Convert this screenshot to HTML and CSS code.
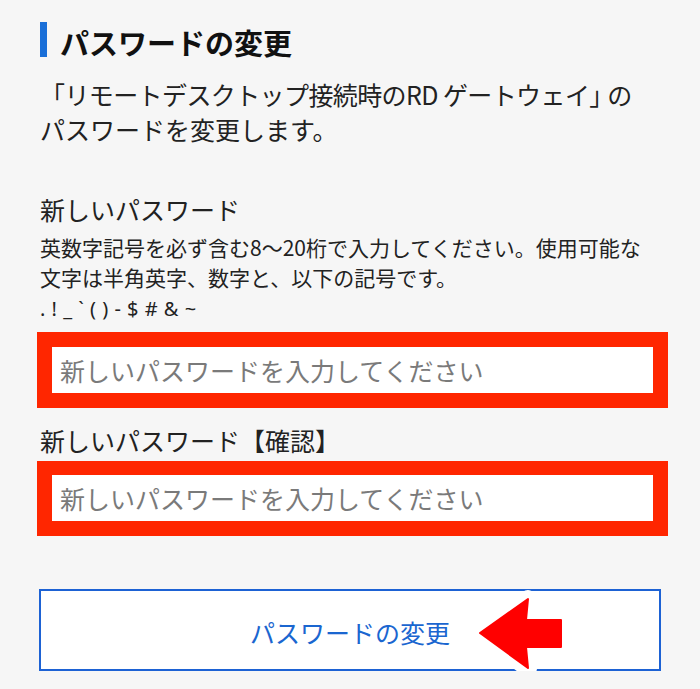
FILE: index.html
```html
<!DOCTYPE html>
<html lang="ja">
<head>
    <meta charset="UTF-8">
    <meta name="viewport" content="width=device-width, initial-scale=1.0">
    <title>パスワードの変更</title>
    <link rel="stylesheet" href="styles.css">
</head>
<body>
    <div class="page">
        <h2 class="title">パスワードの変更</h2>
        <p class="lead"><span class="tight">「リモートデスクトップ接続時のRD ゲートウェイ<span class="half">」</span>の</span><br>パスワードを変更します。</p>

        <form class="pw-form">
            <label class="field-label" for="new-password">新しいパスワード</label>
            <p class="help">英数字記号を必ず含む8〜20桁で入力してください。使用可能な<br>文字は半角英字、数字と、以下の記号です。<br><span class="symbols">. ! _ ` ( ) - $ # &amp; ~</span></p>

            <!-- highlighted input -->
            <div class="mark">
                <input type="password" id="new-password" class="pw-input" placeholder="新しいパスワードを入力してください">
            </div>

            <label class="field-label label-confirm" for="confirm-password">新しいパスワード【確認】</label>
            <div class="mark">
                <input type="password" id="confirm-password" class="pw-input" placeholder="新しいパスワードを入力してください">
            </div>

            <div class="submit-wrap">
                <button type="submit" class="submit-btn">パスワードの変更</button>
                <!-- pointer arrow -->
                <svg class="arrow" width="110" height="110" viewBox="0 0 110 110">
                    <path d="M10 55 L58 21 L56 42 L91 42 L91 69 L56 69 L58 90 Z" fill="#fff" stroke="#fff" stroke-width="18" stroke-linejoin="round"/>
                    <path d="M10 55 L58 21 L56 42 L91 42 L91 69 L56 69 L58 90 Z" fill="#ff0000" stroke="#ff0000" stroke-width="2" stroke-linejoin="round"/>
                </svg>
            </div>
        </form>
    </div>
</body>
</html>
```

FILE: styles.css
```css
body {
    margin: 0;
    padding: 0;
    background: #f6f6f6;
    font-family: "Noto Sans CJK JP", "Noto Sans", sans-serif;
    color: #222;
}

.page {
    padding: 22px 32px 0 40px;
}

/* Title */
.title {
    margin: 0;
    border-left: 7px solid #1a6fd8;
    padding: 5px 0 0 13px;
    font-size: 29px;
    font-weight: bold;
    line-height: 30px;
    color: #111;
}

.lead {
    margin: 20px 0 0;
    font-size: 25px;
    line-height: 35px;
}

.tight {
    letter-spacing: -0.6px;
}

.half {
    font-feature-settings: "halt";
    margin-right: 6px;
}

/* Form */
.pw-form {
    display: flex;
    flex-direction: column;
    margin-top: 45px;
}

.field-label {
    font-size: 25px;
    line-height: 35px;
}

.help {
    margin: 5px 0 0;
    font-size: 21px;
    line-height: 30px;
}

.symbols {
    font-family: "Noto Sans", sans-serif;
    font-size: 20px;
    word-spacing: 1px;
}

.mark {
    margin: 8px 0 0 -3px;
    width: 601px;
    border: 15px solid #ff2600;
    background: #fff;
}

.pw-input {
    display: block;
    width: 100%;
    height: 46px;
    box-sizing: border-box;
    border: none;
    padding: 0 8px;
    background: #fff;
    font-family: inherit;
    font-size: 25px;
    outline: none;
}

.pw-input::placeholder {
    color: #7a7a7a;
}

.label-confirm {
    margin-top: 15px;
}

.label-confirm + .mark {
    margin-top: 3px;
    border-top-width: 14px;
}

/* Submit */
.submit-wrap {
    position: relative;
    margin-top: 53px;
    margin-left: -1px;
}

.submit-btn {
    width: 622px;
    height: 82px;
    padding-top: 4px;
    border: 2px solid #1d62d4;
    background: #fff;
    color: #1a66d0;
    font-family: inherit;
    font-size: 25px;
    cursor: pointer;
}

.arrow {
    position: absolute;
    left: 431px;
    top: -11px;
}
```
